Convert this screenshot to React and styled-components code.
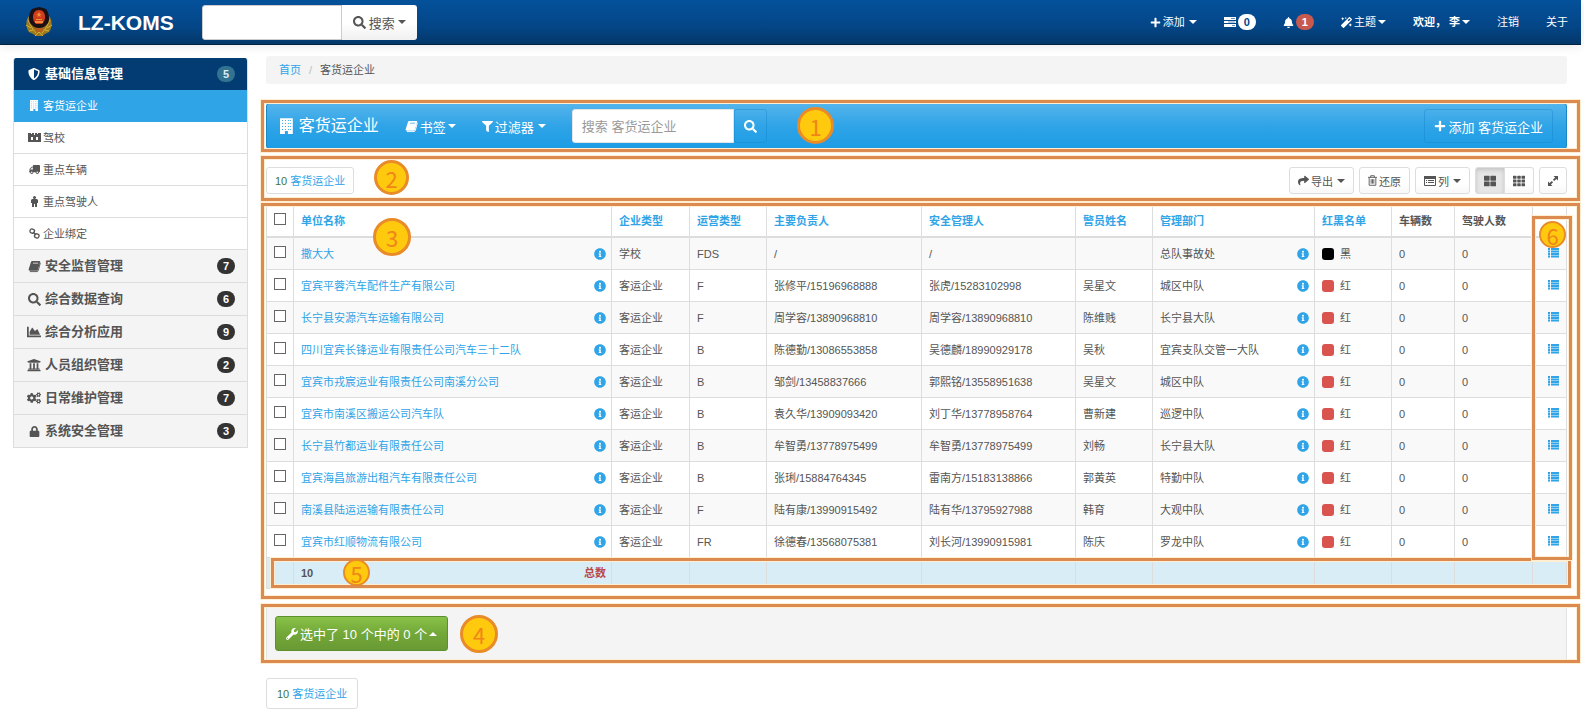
import React from "react"
import styled, { createGlobalStyle, css } from "styled-components"
import {
  FaSearch, FaPlus, FaBell, FaMagic, FaShieldAlt, FaTruck,
  FaChartArea, FaUniversity, FaCogs, FaLock, FaFilter, FaShare, FaThLarge, FaTh,
  FaInfoCircle, FaWrench,
} from "react-icons/fa"

const menu = [
  { name: "安全监督管理", icon: <BookIcon />, count: 7 },
  { name: "综合数据查询", icon: <FaSearch />, count: 6 },
  { name: "综合分析应用", icon: <FaChartArea size={14} />, count: 9 },
  { name: "人员组织管理", icon: <FaUniversity size={14} />, count: 2 },
  { name: "日常维护管理", icon: <FaCogs size={14} />, count: 7 },
  { name: "系统安全管理", icon: <FaLock size={11} />, count: 3 },
]

const subMenu = [
  { name: "客货运企业", icon: <BuildingIcon />, active: true },
  { name: "驾校", icon: <CastleIcon /> },
  { name: "重点车辆", icon: <Flip><FaTruck /></Flip> },
  { name: "重点驾驶人", icon: <PersonIcon /> },
  { name: "企业绑定", icon: <LinkIcon /> },
]

const columns = [
  { title: "单位名称", sort: true },
  { title: "企业类型", width: 78, sort: true },
  { title: "运营类型", width: 77, sort: true },
  { title: "主要负责人", width: 155, sort: true },
  { title: "安全管理人", width: 154, sort: true },
  { title: "警员姓名", width: 77, sort: true },
  { title: "管理部门", width: 162, sort: true },
  { title: "红黑名单", width: 77, sort: true },
  { title: "车辆数", width: 63 },
  { title: "驾驶人数", width: 78 },
  { title: "", width: 34 },
]

const rows = [
  ["撒大大", "学校", "FDS", "/", "/", "", "总队事故处", "黑"],
  ["宜宾平蓉汽车配件生产有限公司", "客运企业", "F", "张修平/15196968888", "张虎/15283102998", "吴星文", "城区中队", "红"],
  ["长宁县安源汽车运输有限公司", "客运企业", "F", "周学容/13890968810", "周学容/13890968810", "陈维贱", "长宁县大队", "红"],
  ["四川宜宾长锋运业有限责任公司汽车三十二队", "客运企业", "B", "陈德勤/13086553858", "吴德麟/18990929178", "吴秋", "宜宾支队交管一大队", "红"],
  ["宜宾市戎宸运业有限责任公司南溪分公司", "客运企业", "B", "邹剑/13458837666", "郭熙铭/13558951638", "吴星文", "城区中队", "红"],
  ["宜宾市南溪区搬运公司汽车队", "客运企业", "B", "袁久华/13909093420", "刘丁华/13778958764", "曹新建", "巡逻中队", "红"],
  ["长宁县竹都运业有限责任公司", "客运企业", "B", "牟智勇/13778975499", "牟智勇/13778975499", "刘畅", "长宁县大队", "红"],
  ["宜宾海昌旅游出租汽车有限责任公司", "客运企业", "B", "张琍/15884764345", "雷南方/15183138866", "郭黄英", "特勤中队", "红"],
  ["南溪县陆运运输有限责任公司", "客运企业", "F", "陆有康/13990915492", "陆有华/13795927988", "韩育", "大观中队", "红"],
  ["宜宾市红顺物流有限公司", "客运企业", "FR", "徐德春/13568075381", "刘长河/13990915981", "陈庆", "罗龙中队", "红"],
]

export default () => {
  return (
    <Page>
      <Global />
      <Navbar>
        <Emblem />
        <Brand href="#">LZ-KOMS</Brand>
        <NavSearch>
          <input type="text" aria-label="搜索内容" />
          <button type="button"><FaSearch />搜索<Caret /></button>
        </NavSearch>
        <NavLinks>
          <NavItem href="#"><FaPlus />添加<Caret $gap /></NavItem>
          <NavItem href="#" aria-label="任务"><TasksIcon /><Badge $tone="white">0</Badge></NavItem>
          <NavItem href="#" aria-label="通知"><FaBell /><Badge $tone="red">1</Badge></NavItem>
          <NavItem href="#"><FaMagic />主题<Caret /></NavItem>
          <NavItem href="#" $bold>欢迎， 李<Caret /></NavItem>
          <NavItem href="#">注销</NavItem>
          <NavItem href="#">关于</NavItem>
        </NavLinks>
      </Navbar>

      <Body>
        <Sidebar>
          <GroupLink href="#" $open>
            <i><FaShieldAlt size={12} /></i>基础信息管理<Badge $tone="teal">5</Badge>
          </GroupLink>
          {subMenu.map(item => (
            <SubLink href="#" key={item.name} $active={item.active}>
              <i>{item.icon}</i>{item.name}
            </SubLink>
          ))}
          {menu.map(item => (
            <GroupLink href="#" key={item.name}>
              <i>{item.icon}</i>{item.name}<Badge>{item.count}</Badge>
            </GroupLink>
          ))}
        </Sidebar>

        <Content>
          <Breadcrumb>
            <a href="#">首页</a><span>/</span>客货运企业
          </Breadcrumb>

          <Section>
            <Toolbar>
              <Title><BuildingIcon />客货运企业</Title>
              <ToolLink type="button"><BookIcon />书签<Caret /></ToolLink>
              <ToolLink type="button"><FaFilter size={11} />过滤器<Caret $gap /></ToolLink>
              <ToolSearch>
                <input type="text" placeholder="搜索 客货运企业" aria-label="搜索 客货运企业" />
                <BlueButton type="button" aria-label="搜索"><FaSearch /></BlueButton>
              </ToolSearch>
              <BlueButton type="button" $add><FaPlus size={12} />添加 客货运企业</BlueButton>
            </Toolbar>
            <Frame />
            <Mark $size={37} $left={531} $top={4}>1</Mark>
          </Section>

          <Section $gap={10}>
            <Actions>
              <Count href="#"><b>10</b> 客货运企业</Count>
              <ButtonGroup>
                <Button type="button"><FaShare />导出<Caret $gap /></Button>
                <Button type="button"><TrashIcon />还原</Button>
                <Button type="button"><TableIcon />列<Caret $gap /></Button>
                <Joined>
                  <Button type="button" $active aria-label="大图"><FaThLarge size={12} /></Button>
                  <Button type="button" aria-label="网格"><FaTh size={12} /></Button>
                </Joined>
                <Button type="button" aria-label="全屏"><ResizeIcon /></Button>
              </ButtonGroup>
            </Actions>
            <Frame />
            <Mark $size={35} $left={108} $top={1}>2</Mark>
          </Section>

          <Section $gap={8}>
            <TableBox>
              <Table>
                <colgroup>
                  <Col $width={27} />
                  {columns.map((c, i) => <Col key={i} $width={c.width} />)}
                </colgroup>
                <thead>
                  <tr>
                    <th><Check type="checkbox" aria-label="全选" /></th>
                    {columns.map((c, i) => (
                      <th key={i}>{c.sort ? <a href="#">{c.title}</a> : c.title}</th>
                    ))}
                  </tr>
                </thead>
                <tbody>
                  {rows.map(([name, type, run, owner, safety, police, dept, list]) => (
                    <tr key={name}>
                      <td><Check type="checkbox" aria-label={name} /></td>
                      <td><Split><a href="#">{name}</a><FaInfoCircle /></Split></td>
                      <td>{type}</td>
                      <td>{run}</td>
                      <td>{owner}</td>
                      <td>{safety}</td>
                      <td>{police}</td>
                      <td><Split>{dept}<FaInfoCircle /></Split></td>
                      <td><Tag $color={list === "黑" ? "#000" : "#d9534f"}>{list}</Tag></td>
                      <td>0</td>
                      <td>0</td>
                      <td><RowMenu href="#" aria-label="操作"><ListIcon /></RowMenu></td>
                    </tr>
                  ))}
                </tbody>
                <tfoot>
                  <tr>
                    <td></td>
                    <td><Split><b>10</b><Total>总数</Total></Split></td>
                    {columns.slice(2).map((c, i) => <td key={i}></td>)}
                    <td>
                      <FooterFrame />
                      <Mark $size={27} $left={77} $top={1}>5</Mark>
                    </td>
                  </tr>
                </tfoot>
              </Table>
            </TableBox>
            <Frame />
            <MenuFrame>
              <Mark $size={27} $left={4} $top={2}>6</Mark>
            </MenuFrame>
            <Mark $size={38} $left={107} $top={12}>3</Mark>
          </Section>

          <Section $gap={11}>
            <Well>
              <GreenButton type="button"><FaWrench size={12} />选中了 10 个中的 0 个<Caret $up /></GreenButton>
            </Well>
            <Frame />
            <Mark $size={38} $left={194} $top={8}>4</Mark>
          </Section>

          <Bottom>
            <Count href="#" $tall><b>10</b> 客货运企业</Count>
          </Bottom>
        </Content>
      </Body>
    </Page>
  )
}

function Emblem() {
  return (
    <svg width="26" height="30" viewBox="0 0 26 30" aria-hidden="true">
      <path d="M3 9C0 12-1 20 3 25l4 2 3 2h6l3-2 4-2c4-5 3-13 0-16l-3 3H6z" fill="#9a7a1c" />
      <path d="M2 13l4 8 4 5M24 13l-4 8-4 5M0 18l5 3M26 18l-5 3M3 24l4-1M23 24l-4-1M9 29l4-4 4 4" fill="none" stroke="#d8ad35" />
      <path d="M13 0l4 1 3 1c3 4 4 10 2 14-2 3-5 5-9 5s-7-2-9-5C2 12 3 6 6 2l3-1z" fill="#1a1016" />
      <path d="M13 3c4 0 6 3 6 7 0 3-1 5-3 7h-6c-2-2-3-4-3-7 0-4 2-7 6-7z" fill="#cf3d1d" />
      <path d="M9 14h8v2H9zM10 12h6v1h-6zM13 5l1 2h2l-2 1 1 2-2-1-2 1 1-2-2-1h2z" fill="#ef8f3a" />
      <path d="M8 21h10l-2 4h-6z" fill="#b4601f" />
    </svg>
  )
}

function BuildingIcon() {
  return (
    <svg width="0.8em" height="1em" viewBox="0 0 13 16" aria-hidden="true">
      <path fillRule="evenodd" fill="currentColor" d="M0 0h13v16H8v-3H5v3H0zM2 2v1h1V2zm3 0v1h1V2zm3 0v1h1V2zm2 0v1h1V2zM2 5v1h1V5zm3 0v1h1V5zm3 0v1h1V5zm2 0v1h1V5zM2 8v1h1V8zm3 0v1h1V8zm3 0v1h1V8zm2 0v1h1V8zM2 11v1h1v-1zm3 0v1h1v-1zm3 0v1h1v-1zm2 0v1h1v-1z" />
    </svg>
  )
}

function BookIcon() {
  return (
    <svg width="1em" height="1em" viewBox="0 0 14 14" aria-hidden="true">
      <path d="M13.300 3L11.200 11q-.4 1.500-1.500 1.500H2" fill="none" stroke="currentColor" strokeWidth="1" />
      <path d="M4.500 1H12.200q1.200 0 .9 1.100L10.700 10.500q-.3 1-1.200 1H1.900Q.3 11.500.7 10L3.300 2Q3.600 1 4.500 1zM5.500 3l-.2 .7h5.500l.2-.7z" fill="currentColor" fillRule="evenodd" />
    </svg>
  )
}

function CastleIcon() {
  return (
    <svg width="13" height="11" viewBox="0 0 13 11" aria-hidden="true">
      <path d="M0 1h3v1h1V1h2v2h1V1h2v1h1V1h3v9H0zM3 5v3h2V5zm5 0v3h2V5z" fill="currentColor" fillRule="evenodd" />
    </svg>
  )
}

function PersonIcon() {
  return (
    <svg width="7" height="11" viewBox="0 0 7 11" aria-hidden="true">
      <circle cx="3.500" cy="1.500" r="1.500" fill="currentColor" />
      <path d="M1 3h5l1 1v3H6v4H4V8H3v3H1V7H0V4z" fill="currentColor" />
    </svg>
  )
}

function LinkIcon() {
  return (
    <svg width="11" height="11" viewBox="0 0 11 11" aria-hidden="true">
      <g fill="none" stroke="currentColor" strokeWidth="1.300">
        <rect x="1" y="1" width="4.500" height="4" rx="1.800" transform="rotate(20 3 3)" />
        <rect x="5.500" y="6" width="4.500" height="4" rx="1.800" transform="rotate(20 8 8)" />
        <path d="M4 4l3 3" />
      </g>
    </svg>
  )
}

function TasksIcon() {
  return (
    <svg width="12" height="10" viewBox="0 0 12 10" aria-hidden="true">
      <path d="M0 0h12v3H0zM0 4h12v2H0zM0 7h12v3H0z" fill="currentColor" />
      <path d="M7 1h4v1H7zM4 4.500h7v1H4zM8 8h3v1H8z" fill="#6b92c0" />
    </svg>
  )
}

function TrashIcon() {
  return (
    <svg width="9" height="11" viewBox="0 0 10 12" aria-hidden="true">
      <path d="M0 2.500h10M3 2.500V.7h4v1.800M1.300 3v8.300h7.400V3M3.500 4.500v5M5 4.500v5M6.500 4.500v5" fill="none" stroke="currentColor" />
    </svg>
  )
}

function TableIcon() {
  return (
    <svg width="12" height="10" viewBox="0 0 12 10" aria-hidden="true">
      <path d="M.5 1h11v8.500H.5z" fill="none" stroke="currentColor" />
      <path d="M0 0h12v3H0zM2 4h1v1H2zm2 0h6v1H4zM2 6h1v1H2zm2 0h6v1H4z" fill="currentColor" />
    </svg>
  )
}

function ResizeIcon() {
  return (
    <svg width="10" height="10" viewBox="0 0 10 10" aria-hidden="true">
      <path d="M5.500 0H10v4.500L8.400 2.900 6.200 5.100 4.900 3.800l2.200-2.200zM4.500 10H0V5.500l1.600 1.600 2.200-2.200 1.300 1.300-2.200 2.200z" fill="currentColor" />
    </svg>
  )
}

function ListIcon() {
  return (
    <svg width="11" height="10" viewBox="0 0 11 10" aria-hidden="true">
      <path d="M0 0h2v10H0zM3 0h8v10H3z" fill="#8fcdf2" />
      <path d="M0 0h2v2H0zm3 0h8v2H3zM0 3h2v1H0zm3 0h8v1H3zM0 5h2v2H0zm3 0h8v2H3zM0 8h2v1H0zm3 0h8v1H3z" fill="currentColor" />
    </svg>
  )
}

function Flip({ children }) {
  return <FlipBox>{children}</FlipBox>
}

const FlipBox = styled.span`
  display: flex;
  transform: scaleX(-1);
`

const Global = createGlobalStyle`
  * {
    box-sizing: border-box;
  }
  body {
    margin: 0;
    background: #fff;
  }
  body, button, input {
    font-family: "Liberation Sans", "Noto Sans CJK SC", sans-serif;
    font-size: 11px;
    color: #555;
  }
  a {
    color: #2fa4e7;
    text-decoration: none;
  }
  svg {
    flex: none;
  }
`

const Page = styled.div`
  padding-right: 3px;
  line-height: 16px;
`

const Navbar = styled.header`
  display: flex;
  align-items: center;
  height: 45px;
  padding: 0 13px 0 26px;
  background: linear-gradient(#04519b, #044687 60%, #033769);
  border-bottom: 1px solid #022241;
  box-shadow: 0 1px 10px rgba(0, 0, 0, 0.1);
`

const Brand = styled.a`
  margin: 2px 28px 0 26px;
  font-size: 21px;
  line-height: 28px;
  font-weight: bold;
  color: #fff;
`

const NavSearch = styled.div`
  display: flex;
  height: 35px;
  input {
    width: 140px;
    border: 1px solid #ccc;
    border-radius: 3px 0 0 3px;
    background: #fff;
  }
  button {
    display: flex;
    align-items: center;
    gap: 3px;
    padding: 0 11px;
    border: 0;
    border-radius: 0 3px 3px 0;
    background: linear-gradient(#fff 50%, #f0f0f0);
    font-size: 13px;
  }
`

const NavLinks = styled.nav`
  display: flex;
  gap: 27px;
  margin-left: auto;
`

const NavItem = styled.a`
  display: flex;
  align-items: center;
  gap: 2px;
  color: #fff;
  font-weight: ${p => (p.$bold ? "bold" : "normal")};
`

const Caret = styled.span`
  margin-left: ${p => (p.$gap ? 2 : 0)}px;
  border: 4px solid transparent;
  ${p => p.$up
    ? css`border-bottom-color: currentColor; border-top: 0;`
    : css`border-top-color: currentColor; border-bottom: 0;`}
`

const tones = {
  white: { bg: "#fff", color: "#034687" },
  red: { bg: "#c8594f", color: "#fff" },
  teal: { bg: "#317390", color: "#d9edf7" },
}

const Badge = styled.span`
  min-width: 18px;
  padding: 0 6px;
  border-radius: 9px;
  text-align: center;
  font-size: 11px;
  font-weight: bold;
  line-height: 16px;
  background: ${p => (tones[p.$tone] ? tones[p.$tone].bg : "#333")};
  color: ${p => (tones[p.$tone] ? tones[p.$tone].color : "#fff")};
`

const Body = styled.div`
  display: flex;
  align-items: flex-start;
  gap: 18px;
  padding: 11px 14px 7px 13px;
`

const Sidebar = styled.nav`
  flex: none;
  width: 235px;
  margin-top: 2px;
  border: 1px solid #ddd;
  border-top: 0;
  border-radius: 3px 3px 0 0;
  overflow: hidden;
`

const GroupLink = styled.a`
  display: flex;
  align-items: center;
  height: 33px;
  padding: 0 12px;
  border-bottom: 1px solid #ddd;
  background: #f4f4f4;
  color: #555;
  font-size: 13px;
  font-weight: bold;
  ${p => p.$open && css`
    height: 32px;
    border-bottom: 0;
    background: #033c73;
    color: #fff;
  `}
  &:last-child {
    height: 32px;
    border-bottom: 0;
  }
  i {
    display: flex;
    justify-content: center;
    width: 16px;
    margin-right: 3px;
  }
  ${Badge} {
    margin-left: auto;
  }
`

const SubLink = styled.a`
  display: flex;
  align-items: center;
  height: 32px;
  padding-left: 13px;
  border-bottom: 1px solid #ddd;
  background: ${p => (p.$active ? "#2fa4e7" : "#fff")};
  border-bottom-color: ${p => (p.$active ? "#2fa4e7" : "#ddd")};
  color: ${p => (p.$active ? "#fff" : "#555")};
  i {
    display: flex;
    justify-content: center;
    width: 14px;
    margin-right: 2px;
  }
`

const Content = styled.main`
  flex: 1;
  min-width: 0;
`

const Breadcrumb = styled.div`
  display: flex;
  height: 28px;
  margin-bottom: 19px;
  padding: 6px 13px;
  background: #f4f4f4;
  border-radius: 3px;
  span {
    padding: 0 8px;
    color: #bbb;
  }
`

const Section = styled.section`
  position: relative;
  margin-top: ${p => p.$gap || 0}px;
`

// orange outline drawn round a part of the page
const outline = css`
  position: absolute;
  border: 3px solid #db8a50;
  box-shadow: 0 0 0 1px #ffeed2, inset 0 0 0 1px #ffeed2;
  pointer-events: none;
`

const Frame = styled.div`
  ${outline}
  inset: -3px -13px -3px -5px;
`

const FooterFrame = styled.div`
  ${outline}
  inset: 0 -5px 1px 5px;
`

const MenuFrame = styled.div`
  ${outline}
  top: 10px;
  right: -5px;
  bottom: 36px;
  width: 40px;
`

const Mark = styled.span`
  position: absolute;
  left: ${p => p.$left}px;
  top: ${p => p.$top}px;
  width: ${p => p.$size}px;
  height: ${p => p.$size}px;
  display: flex;
  align-items: center;
  justify-content: center;
  border: ${p => (p.$size > 30 ? 3 : 2)}px solid #e88b28;
  border-radius: 50%;
  background: #ffc90e;
  color: #f08519;
  font-family: "Noto Sans CJK SC", sans-serif;
  font-size: 22px;
  line-height: 22px;
`

const Toolbar = styled.div`
  display: flex;
  align-items: center;
  height: 46px;
  padding: 0 13px;
  border: 1px solid #1a87c6;
  border-radius: 3px;
  background: linear-gradient(#54b4eb, #2fa4e7 50%, #1d9ce5);
  color: #fff;
`

const Title = styled.h1`
  display: flex;
  align-items: center;
  gap: 6px;
  margin: 0 26px 0 0;
  font-size: 16px;
  line-height: 24px;
  font-weight: normal;
`

const ToolLink = styled.button`
  display: flex;
  align-items: center;
  gap: 2px;
  margin-right: 26px;
  padding: 0;
  border: 0;
  background: none;
  color: #fff;
  font-size: 13px;
`

const ToolSearch = styled.div`
  display: flex;
  height: 34px;
  input {
    width: 162px;
    padding: 0 9px;
    border: 1px solid #e5e5e5;
    border-radius: 3px 0 0 3px;
    background: #fff;
    font-size: 13px;
  }
  input::placeholder {
    color: #999;
  }
`

const BlueButton = styled.button`
  display: flex;
  align-items: center;
  gap: 2px;
  height: 34px;
  padding: 0 9px;
  border: 1px solid rgba(20, 130, 200, 0.4);
  border-radius: 3px;
  background: none;
  color: #fff;
  font-size: 13px;
  margin-left: ${p => (p.$add ? "auto" : 0)};
`

const Actions = styled.div`
  display: flex;
  align-items: center;
  justify-content: space-between;
  height: 39px;
  padding-top: 4px;
`

const Count = styled.a`
  display: inline-flex;
  align-items: center;
  height: ${p => (p.$tall ? 31 : 27)}px;
  padding: 0 ${p => (p.$tall ? 10 : 8)}px;
  border: 1px solid #ddd;
  border-radius: 3px;
  white-space: pre;
  b {
    font-weight: normal;
    color: #3c763d;
  }
`

const ButtonGroup = styled.div`
  display: flex;
  gap: 5px;
`

const Button = styled.button`
  display: flex;
  align-items: center;
  gap: 2px;
  height: 27px;
  padding: 0 8px;
  border: 1px solid #ddd;
  border-radius: 3px;
  background: ${p => (p.$active ? "#e6e6e6" : "linear-gradient(#fff, #fff 60%, #f8f8f8)")};
  box-shadow: ${p => (p.$active ? "inset 0 2px 4px rgba(0, 0, 0, 0.15)" : "none")};
`

const Joined = styled.div`
  display: flex;
  ${Button}:first-child {
    border-radius: 3px 0 0 3px;
  }
  ${Button}:last-child {
    border-left: 0;
    border-radius: 0 3px 3px 0;
  }
`

const TableBox = styled.div`
  padding-bottom: 7px;
`

const Col = styled.col`
  width: ${p => (p.$width ? p.$width + "px" : "auto")};
`

const Table = styled.table`
  width: 100%;
  table-layout: fixed;
  border-collapse: separate;
  border-spacing: 0;
  border-right: 1px solid #ddd;
  th, td {
    height: 32px;
    padding: 0 5px 0 7px;
    border-left: 1px solid #ddd;
    border-bottom: 1px solid #ddd;
    text-align: left;
    white-space: nowrap;
  }
  th {
    border-bottom-width: 2px;
  }
  tbody tr:nth-child(odd) {
    background: #f9f9f9;
  }
  tfoot tr {
    position: relative;
    background: #d9edf7;
  }
  tfoot td {
    height: 31px;
  }
`

const Check = styled.input`
  appearance: none;
  display: block;
  width: 12px;
  height: 12px;
  margin: 0 0 4px;
  border: 1px solid #666;
  background: #fff;
  &:checked {
    background: #2fa4e7;
  }
`

const Split = styled.div`
  display: flex;
  align-items: center;
  justify-content: space-between;
  svg {
    width: 12px;
    height: 12px;
    color: #2fa4e7;
  }
`

const Total = styled.b`
  color: #b94a48;
`

const Tag = styled.span`
  display: flex;
  align-items: center;
  gap: 6px;
  &::before {
    content: "";
    width: 12px;
    height: 12px;
    border-radius: 3px;
    background: ${p => p.$color};
  }
`

const RowMenu = styled.a`
  display: flex;
  justify-content: flex-end;
  padding: 0 2px 2px 0;
`

const Well = styled.div`
  height: 53px;
  padding: 8px;
  border: 1px solid #e3e3e3;
  background: #f4f4f4;
`

const GreenButton = styled.button`
  display: flex;
  align-items: center;
  gap: 2px;
  height: 35px;
  padding: 0 10px;
  border: 1px solid #5d8f2c;
  border-radius: 3px;
  background: linear-gradient(#88c149, #73a839 50%, #699934);
  color: #fff;
  font-size: 13px;
`

const Bottom = styled.div`
  padding-top: 18px;
`
